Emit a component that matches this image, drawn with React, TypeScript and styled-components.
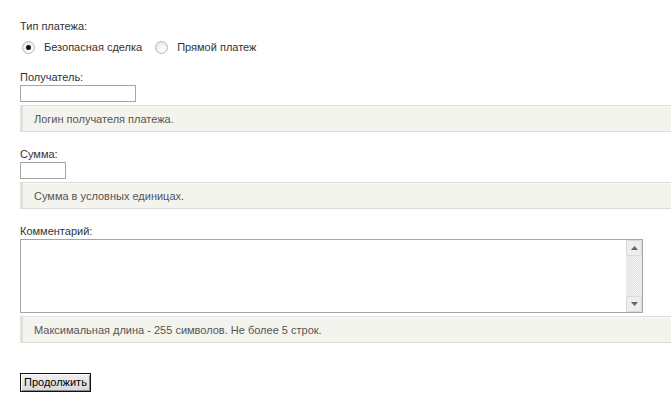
import React from "react";
import styled, { createGlobalStyle } from "styled-components";

const Global = createGlobalStyle`
  html, body { margin: 0; padding: 0; background: #fff; }
  body { font-family: Tahoma, "Liberation Sans", Arial, sans-serif; font-size: 11px; color: #333; overflow: hidden; }
`;

const Form = styled.form`
  display: flex;
  flex-direction: column;
  padding: 20px 0 0 20px;
  width: 651px;
`;

const Field = styled.div<{ $gap?: number }>`
  display: flex;
  flex-direction: column;
  align-items: flex-start;
  margin-bottom: ${(p) => p.$gap ?? 15}px;
`;

const Label = styled.label<{ $mb?: number }>`
  display: block;
  line-height: 13px;
  margin-bottom: ${(p) => p.$mb ?? 1}px;
  color: #333;
`;

const RadioRow = styled.div`
  display: flex;
  align-items: center;
  height: 14px;
  margin-top: 6px;
  margin-left: 2px;
`;

const RadioOption = styled.label`
  display: flex;
  align-items: center;
  gap: 9px;
  margin-right: 13px;
  color: #333;
`;

const RadioCircle = styled.span<{ $checked?: boolean }>`
  position: relative;
  width: 13px;
  height: 13px;
  box-sizing: border-box;
  border-radius: 50%;
  border: 1px solid #b8b8b8;
  background: radial-gradient(circle at 65% 70%, #ffffff 0%, #f4f4f4 45%, #dcdcdc 100%);
  &::after {
    content: "";
    display: ${(p) => (p.$checked ? "block" : "none")};
    position: absolute;
    left: 3px;
    top: 3px;
    width: 5px;
    height: 5px;
    border-radius: 50%;
    background: #111;
  }
`;

const TextInput = styled.input<{ $w: number }>`
  box-sizing: border-box;
  width: ${(p) => p.$w}px;
  height: 17px;
  border: 1px solid #a5a5a5;
  background: #fff;
  padding: 0 2px;
  margin: 0;
  font: inherit;
  outline: none;
`;

const Hint = styled.div`
  box-sizing: border-box;
  align-self: stretch;
  height: 27px;
  margin-top: 3px;
  padding-left: 11px;
  display: flex;
  align-items: center;
  background: #f4f4ee;
  border-top: 1px solid #dcdcd8;
  border-bottom: 1px solid #dcdcd8;
  border-left: 3px solid #e1e1dc;
  box-shadow: inset 0 1px 0 #fbfbf8;
  color: #555;
`;

const AreaBox = styled.div`
  display: flex;
  box-sizing: border-box;
  width: 623px;
  height: 74px;
  border: 1px solid #a5a5a5;
  background: #fff;
`;

const Area = styled.textarea`
  flex: 1;
  border: none;
  resize: none;
  outline: none;
  font: inherit;
  padding: 2px;
  margin: 0;
  overflow: hidden;
`;

const ScrollBar = styled.div`
  width: 16px;
  display: flex;
  flex-direction: column;
  background-color: #f2f2f2;
  background-image:
    linear-gradient(45deg, #e2e2e2 25%, transparent 25%, transparent 75%, #e2e2e2 75%),
    linear-gradient(45deg, #e2e2e2 25%, transparent 25%, transparent 75%, #e2e2e2 75%);
  background-size: 2px 2px;
  background-position: 0 0, 1px 1px;
`;

const ScrollBtn = styled.div`
  height: 16px;
  box-sizing: border-box;
  display: flex;
  align-items: center;
  justify-content: center;
  background: #eeeeee;
  border: 1px solid #dadada;
`;

const Spacer = styled.div`
  flex: 1;
`;

const Submit = styled.button`
  align-self: flex-start;
  margin-top: 30px;
  height: 19px;
  padding: 0 3px;
  font: inherit;
  font-size: 11px;
  color: #000;
  background: linear-gradient(#f0f0f0, #d8d8d8);
  border: 1px solid #111;
  box-shadow: inset 1px 1px 0 #fff, inset -1px -1px 0 #888;
  cursor: pointer;
  line-height: 15px;
`;

const Arrow = ({ down }: { down?: boolean }) => (
  <svg width="7" height="4" viewBox="0 0 7 4">
    <path d={down ? "M0 0h7L3.5 4z" : "M0 4h7L3.5 0z"} fill="#666" />
  </svg>
);

export default function App() {
  return (
    <>
      <Global />
      <Form onSubmit={(e) => e.preventDefault()}>
        <Field $gap={17}>
          <Label>Тип платежа:</Label>
          <RadioRow>
            <RadioOption>
              <RadioCircle $checked />
              Безопасная сделка
            </RadioOption>
            <RadioOption>
              <RadioCircle />
              Прямой платеж
            </RadioOption>
          </RadioRow>
        </Field>
        <Field $gap={16}>
          <Label>Получатель:</Label>
          <TextInput $w={116} />
          <Hint>Логин получателя платежа.</Hint>
        </Field>
        <Field $gap={16}>
          <Label>Сумма:</Label>
          <TextInput $w={46} />
          <Hint>Сумма в условных единицах.</Hint>
        </Field>
        <Field $gap={0}>
          <Label $mb={1}>Комментарий:</Label>
          <AreaBox>
            <Area />
            <ScrollBar>
              <ScrollBtn>
                <Arrow />
              </ScrollBtn>
              <Spacer />
              <ScrollBtn>
                <Arrow down />
              </ScrollBtn>
            </ScrollBar>
          </AreaBox>
          <Hint>Максимальная длина - 255 символов. Не более 5 строк.</Hint>
        </Field>
        <Submit type="submit">Продолжить</Submit>
      </Form>
    </>
  );
}
